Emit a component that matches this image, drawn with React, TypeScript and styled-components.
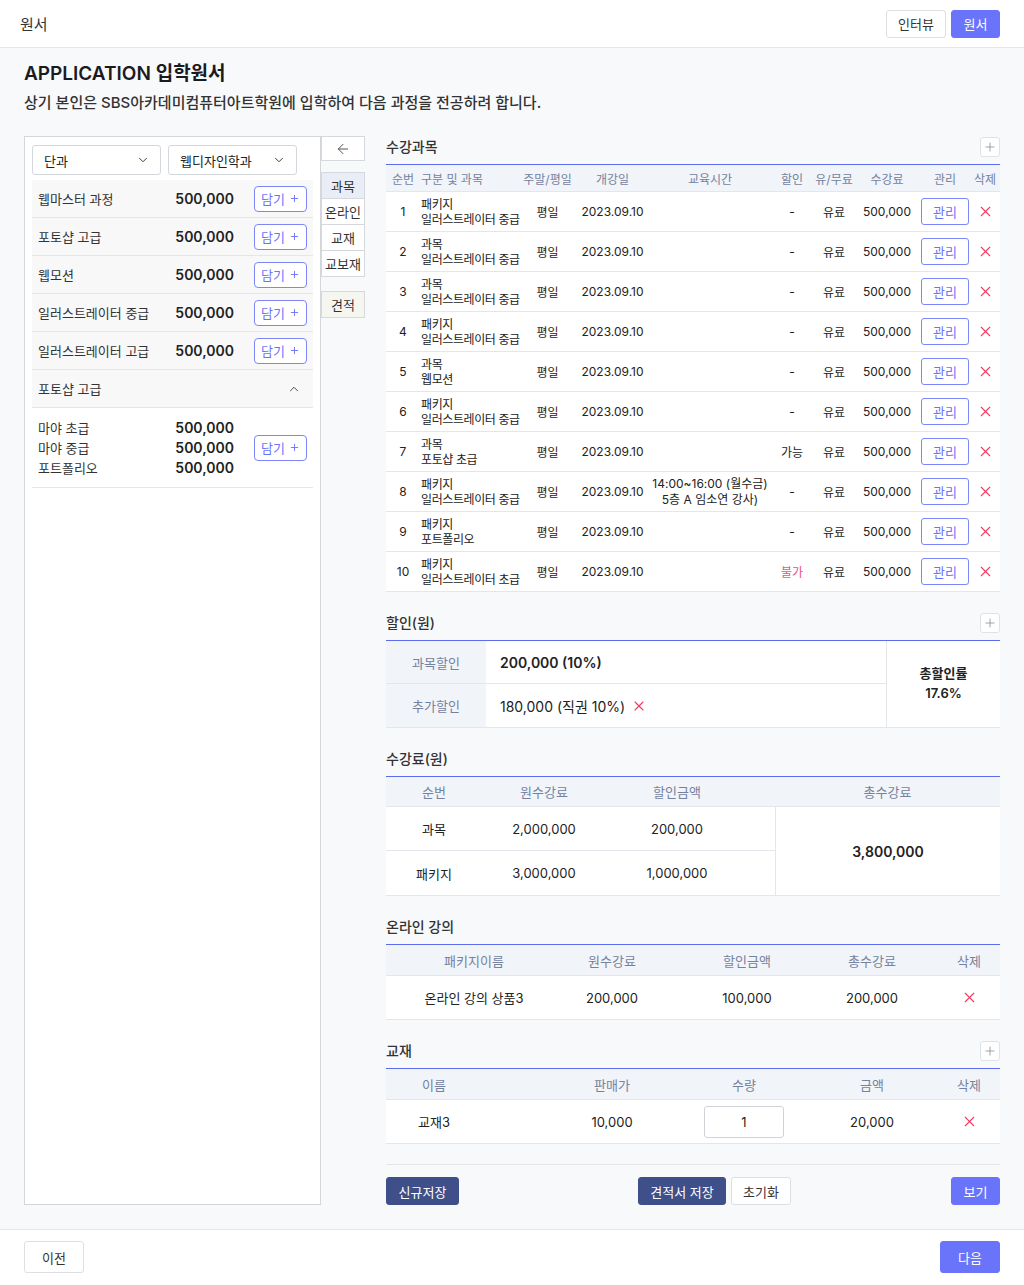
import React from 'react';
import styled, { createGlobalStyle } from 'styled-components';
import { ArrowLeft, ChevronDown, ChevronUp, Plus, X } from 'lucide-react';

const GlobalStyle = createGlobalStyle`
    * { box-sizing: border-box; }
    body {
        margin: 0;
        background: #f8f9fb;
        font-family: 'Inter', 'Noto Sans CJK KR', sans-serif;
        color: #222;
    }
`;

const BLUE = '#6a74fb';
const NAVY = '#3f4f8a';
const LINE = '#e3e6ea';
const HEAD_BG = '#f1f4f8';
const HEAD_TEXT = '#7482a0';
const RED = '#f43b63';

// 상단 헤더
const TopBar = styled.header`
    height: 48px;
    background: white;
    border-bottom: 1px solid ${LINE};
    display: flex;
    align-items: center;
    justify-content: space-between;
    padding: 0 24px 0 20px;
`;

const TopTitle = styled.div`
    font-size: 15px;
    color: #333;
`;

const TopButtons = styled.div`
    display: flex;
    gap: 5px;
`;

const Btn = styled.button<{ $variant?: 'primary' | 'navy' | 'ghost' | 'outline'; $h?: number; $w?: number }>`
    height: ${p => p.$h || 28}px;
    ${p => p.$w ? `width: ${p.$w}px;` : ''}
    font-family: inherit;
    font-size: 13px;
    border-radius: 3px;
    cursor: pointer;
    display: inline-flex;
    align-items: center;
    justify-content: center;
    gap: 4px;
    padding: 0;
    border: 1px solid ${p => p.$variant === 'primary' ? BLUE : p.$variant === 'navy' ? NAVY : p.$variant === 'outline' ? '#7c86f6' : '#dcdfe4'};
    background: ${p => p.$variant === 'primary' ? BLUE : p.$variant === 'navy' ? NAVY : 'white'};
    color: ${p => p.$variant === 'primary' || p.$variant === 'navy' ? 'white' : p.$variant === 'outline' ? '#6a74fb' : '#333'};
`;

const Main = styled.main`
    padding: 12px 24px 24px;
`;

const Title = styled.h1`
    margin: 0;
    font-size: 19px;
    line-height: 28px;
    font-weight: 600;
    color: #1b1b1f;
`;

const SubTitle = styled.p`
    margin: 4px 0 0;
    font-size: 15px;
    line-height: 22px;
    font-weight: 500;
    color: #333;
`;

const Layout = styled.div`
    margin-top: 22px;
    display: grid;
    grid-template-columns: 297px 45px 1fr;
`;

// 왼쪽 과목 목록
const LeftPanel = styled.aside`
    background: white;
    border: 1px solid #d3d6db;
    padding: 8px 7px;
`;

const SelectRow = styled.div`
    display: flex;
    gap: 7px;
    margin-bottom: 5px;
`;

const Select = styled.div`
    width: 129px;
    height: 30px;
    border: 1px solid #d4d7dc;
    border-radius: 3px;
    display: flex;
    align-items: center;
    justify-content: space-between;
    padding: 0 10px 0 11px;
    font-size: 13px;
    color: #222;
`;

const ItemRow = styled.div<{ $white?: boolean; $tall?: boolean }>`
    height: ${p => p.$tall ? 80 : 38}px;
    background: ${p => p.$white ? 'white' : '#f8f8f9'};
    border-bottom: 1px solid ${LINE};
    display: grid;
    grid-template-columns: 1fr 80px 73px;
    align-items: center;
    padding: 0 6px;
    font-size: 13px;
    color: #333;
`;

const Price = styled.span`
    font-size: 14px;
    font-weight: 600;
    color: #222;
    text-align: right;
`;

const Stack = styled.div<{ $right?: boolean }>`
    display: flex;
    flex-direction: column;
    line-height: 20px;
    text-align: ${p => p.$right ? 'right' : 'left'};
`;

const CartButton = styled(Btn)`
    justify-self: end;
    height: 26px;
    width: 53px;
    font-size: 13px;
    border-radius: 4px;
`;

const AccordionHead = styled.div`
    height: 38px;
    background: #f8f8f9;
    border-bottom: 1px solid ${LINE};
    display: flex;
    align-items: center;
    justify-content: space-between;
    padding: 0 12px 0 6px;
    font-size: 13px;
    color: #333;
`;

// 가운데 탭
const MidColumn = styled.div`
    display: flex;
    flex-direction: column;
`;

const MidBox = styled.div<{ $bg?: string }>`
    width: 44px;
    height: 27px;
    border: 1px solid #d5d8dd;
    margin-top: -1px;
    display: flex;
    align-items: center;
    justify-content: center;
    background: ${p => p.$bg || 'white'};
    font-size: 13px;
    color: #333;
`;

const BackBox = styled(MidBox)`
    height: 25px;
    margin-top: 0;
    margin-bottom: 12px;
    color: #555;
`;

const Spacer = styled.div<{ $h: number }>`
    height: ${p => p.$h}px;
`;

// 오른쪽 내용
const RightColumn = styled.section`
    margin-left: 20px;
    display: flex;
    flex-direction: column;
`;

const SectionHead = styled.div<{ $first?: boolean }>`
    height: 22px;
    margin: ${p => p.$first ? 0 : 20}px 0 6px;
    display: flex;
    align-items: center;
    justify-content: space-between;
    font-size: 14px;
    font-weight: 500;
    color: #333;
`;

const HeadText = styled.span`
    margin-top: -3px;
`;

const PlusBtn = styled.div`
    width: 20px;
    height: 20px;
    border: 1px solid #dfe2e6;
    border-radius: 3px;
    background: white;
    display: flex;
    align-items: center;
    justify-content: center;
    color: #888;
`;

const Table = styled.div`
    border-top: 1px solid #5b6cf0;
    background: white;
`;

const GridRow = styled.div<{ $cols: string; $h: number; $head?: boolean; $size?: number }>`
    display: grid;
    grid-template-columns: ${p => p.$cols};
    height: ${p => p.$h}px;
    align-items: center;
    background: ${p => p.$head ? HEAD_BG : 'white'};
    border-bottom: 1px solid ${LINE};
    font-size: ${p => p.$size || 12}px;
    color: ${p => p.$head ? HEAD_TEXT : '#222'};
`;

const Cell = styled.div<{ $align?: 'left' | 'center' | 'right'; $pl?: number; $pr?: number; $color?: string }>`
    padding-left: ${p => p.$pl || 0}px;
    padding-right: ${p => p.$pr || 0}px;
    ${p => p.$color ? `color: ${p.$color};` : ''}
    display: flex;
    justify-content: ${p => p.$align === 'left' ? 'flex-start' : p.$align === 'right' ? 'flex-end' : 'center'};
    align-items: center;
    white-space: nowrap;
`;

const SubjectCell = styled.div`
    display: flex;
    flex-direction: column;
    line-height: 15px;
    font-size: 12px;
    letter-spacing: -0.4px;
    white-space: nowrap;
    padding-left: 1px;
`;

const TimeCell = styled.div`
    text-align: center;
    line-height: 16px;
    white-space: nowrap;
`;

const ManageBtn = styled(Btn)`
    height: 27px;
    width: 48px;
    margin: 0 auto;
    font-size: 13px;
`;

const RowIcon = styled(X)`
    color: ${RED};
`;

// 할인 테이블
const DiscountGrid = styled.div`
    display: grid;
    grid-template-columns: 100px 400px 114px;
    grid-template-rows: 43px 43px;
    background: white;
    border-top: 1px solid #5b6cf0;
    border-bottom: 1px solid ${LINE};
`;

const LabelCell = styled.div<{ $line?: boolean }>`
    background: ${HEAD_BG};
    color: ${HEAD_TEXT};
    font-size: 13px;
    display: flex;
    align-items: center;
    justify-content: center;
    ${p => p.$line ? `border-bottom: 1px solid ${LINE};` : ''}
`;

const ValueCell = styled.div<{ $bold?: boolean; $line?: boolean }>`
    display: flex;
    align-items: center;
    gap: 6px;
    padding-left: 14px;
    font-size: 14px;
    font-weight: ${p => p.$bold ? 600 : 400};
    ${p => p.$line ? `border-bottom: 1px solid ${LINE};` : ''}
`;

const TotalCell = styled.div`
    grid-row: 1 / span 2;
    grid-column: 3;
    border-left: 1px solid ${LINE};
    display: flex;
    flex-direction: column;
    align-items: center;
    justify-content: center;
    font-size: 13px;
    font-weight: 600;
    line-height: 20px;
    padding-bottom: 2px;
`;

// 수강료 테이블
const FeeGrid = styled.div`
    display: grid;
    grid-template-columns: 96px 124px 142px 27px 225px;
    grid-template-rows: 30px 44px 44px;
    background: white;
    border-top: 1px solid #5b6cf0;
    border-bottom: 1px solid ${LINE};
    font-size: 13px;
`;

const FeeHead = styled.div`
    background: ${HEAD_BG};
    color: ${HEAD_TEXT};
    display: flex;
    align-items: center;
    justify-content: center;
    border-bottom: 1px solid ${LINE};
`;

const FeeCell = styled.div<{ $line?: boolean }>`
    display: flex;
    align-items: center;
    justify-content: center;
    ${p => p.$line ? `border-bottom: 1px solid ${LINE};` : ''}
`;

const FeeTotal = styled.div`
    grid-column: 5;
    grid-row: 2 / span 2;
    border-left: 1px solid ${LINE};
    display: flex;
    align-items: center;
    justify-content: center;
    font-size: 14px;
    font-weight: 600;
`;

const QtyInput = styled.div`
    width: 80px;
    height: 32px;
    border: 1px solid #cfd3d8;
    border-radius: 3px;
    display: flex;
    align-items: center;
    justify-content: center;
    font-size: 13px;
    background: white;
`;

const ActionBar = styled.div`
    margin-top: 20px;
    border-top: 1px solid ${LINE};
    padding-top: 12px;
    display: flex;
    align-items: center;
    justify-content: space-between;
`;

const ActionGroup = styled.div<{ $offset?: number }>`
    display: flex;
    gap: 5px;
    margin-left: ${p => p.$offset || 0}px;
`;

const Footer = styled.footer`
    height: 56px;
    background: white;
    border-top: 1px solid ${LINE};
    display: flex;
    align-items: flex-start;
    justify-content: space-between;
    padding: 11px 24px 0;
`;

const leftItems = ['웹마스터 과정', '포토샵 고급', '웹모션', '일러스트레이터 중급', '일러스트레이터 고급'];

interface Course {
    type: string
    name: string
    time?: string[]
    discount: string
}

const courses: Course[] = [
    { type: '패키지', name: '일러스트레이터 중급', discount: '-' },
    { type: '과목', name: '일러스트레이터 중급', discount: '-' },
    { type: '과목', name: '일러스트레이터 중급', discount: '-' },
    { type: '패키지', name: '일러스트레이터 중급', discount: '-' },
    { type: '과목', name: '웹모션', discount: '-' },
    { type: '패키지', name: '일러스트레이터 중급', discount: '-' },
    { type: '과목', name: '포토샵 초급', discount: '가능' },
    { type: '패키지', name: '일러스트레이터 중급', time: ['14:00~16:00 (월수금)', '5층 A 임소연 강사)'], discount: '-' },
    { type: '패키지', name: '포트폴리오', discount: '-' },
    { type: '패키지', name: '일러스트레이터 초급', discount: '불가' },
];

const courseCols = '34px 100px 55px 75px 120px 44px 40px 66px 50px 30px';
const listCols = '176px 100px 170px 80px 88px';

const CartBtn = () => (
    <CartButton $variant="outline">담기 <Plus size={11} strokeWidth={2} /></CartButton>
);

const App = function() {
    return (
        <>
            <GlobalStyle/>
            <TopBar>
                <TopTitle>원서</TopTitle>
                <TopButtons>
                    <Btn $w={60} $h={28}>인터뷰</Btn>
                    <Btn $variant="primary" $w={49} $h={28}>원서</Btn>
                </TopButtons>
            </TopBar>

            <Main>
                <Title>APPLICATION 입학원서</Title>
                <SubTitle>상기 본인은 SBS아카데미컴퓨터아트학원에 입학하여 다음 과정을 전공하려 합니다.</SubTitle>

                <Layout>
                    <LeftPanel>
                        <SelectRow>
                            <Select>단과 <ChevronDown size={14} strokeWidth={1.5} /></Select>
                            <Select>웹디자인학과 <ChevronDown size={14} strokeWidth={1.5} /></Select>
                        </SelectRow>
                        {leftItems.map(item => (
                            <ItemRow key={item}>
                                <span>{item}</span>
                                <Price>500,000</Price>
                                <CartBtn/>
                            </ItemRow>
                        ))}
                        <AccordionHead>
                            포토샵 고급
                            <ChevronUp size={14} strokeWidth={1.5} />
                        </AccordionHead>
                        <ItemRow $white $tall>
                            <Stack>
                                <span>마야 초급</span>
                                <span>마야 중급</span>
                                <span>포트폴리오</span>
                            </Stack>
                            <Stack $right>
                                <Price>500,000</Price>
                                <Price>500,000</Price>
                                <Price>500,000</Price>
                            </Stack>
                            <CartBtn/>
                        </ItemRow>
                    </LeftPanel>

                    <MidColumn>
                        <BackBox><ArrowLeft size={16} strokeWidth={1.5} /></BackBox>
                        <MidBox $bg="#e9edf5">과목</MidBox>
                        <MidBox>온라인</MidBox>
                        <MidBox>교재</MidBox>
                        <MidBox>교보재</MidBox>
                        <Spacer $h={15}/>
                        <MidBox $bg="#f6f6f1">견적</MidBox>
                    </MidColumn>

                    <RightColumn>
                        <SectionHead $first>
                            <HeadText>수강과목</HeadText>
                            <PlusBtn><Plus size={14} strokeWidth={1.3} /></PlusBtn>
                        </SectionHead>
                        <Table>
                            <GridRow $cols={courseCols} $h={27} $head>
                                <Cell>순번</Cell>
                                <Cell $align="left" $pl={1}>구분 및 과목</Cell>
                                <Cell>주말/평일</Cell>
                                <Cell>개강일</Cell>
                                <Cell>교육시간</Cell>
                                <Cell>할인</Cell>
                                <Cell>유/무료</Cell>
                                <Cell>수강료</Cell>
                                <Cell>관리</Cell>
                                <Cell>삭제</Cell>
                            </GridRow>
                            {courses.map((c, i) => (
                                <GridRow key={i} $cols={courseCols} $h={40}>
                                    <Cell>{i + 1}</Cell>
                                    <SubjectCell>
                                        <span>{c.type}</span>
                                        <span>{c.name}</span>
                                    </SubjectCell>
                                    <Cell>평일</Cell>
                                    <Cell>2023.09.10</Cell>
                                    <TimeCell>{c.time && c.time.map(t => <div key={t}>{t}</div>)}</TimeCell>
                                    <Cell $color={c.discount === '불가' ? '#f0507a' : undefined}>{c.discount}</Cell>
                                    <Cell>유료</Cell>
                                    <Cell>500,000</Cell>
                                    <Cell><ManageBtn $variant="outline">관리</ManageBtn></Cell>
                                    <Cell><RowIcon size={17} strokeWidth={1.6} /></Cell>
                                </GridRow>
                            ))}
                        </Table>

                        <SectionHead>
                            <HeadText>할인(원)</HeadText>
                            <PlusBtn><Plus size={14} strokeWidth={1.3} /></PlusBtn>
                        </SectionHead>
                        <DiscountGrid>
                            <LabelCell $line>과목할인</LabelCell>
                            <ValueCell $bold $line>200,000 (10%)</ValueCell>
                            <TotalCell>
                                <span>총할인률</span>
                                <span>17.6%</span>
                            </TotalCell>
                            <LabelCell>추가할인</LabelCell>
                            <ValueCell>180,000 (직권 10%) <RowIcon size={16} strokeWidth={1.6} /></ValueCell>
                        </DiscountGrid>

                        <SectionHead><HeadText>수강료(원)</HeadText></SectionHead>
                        <FeeGrid>
                            <FeeHead>순번</FeeHead>
                            <FeeHead>원수강료</FeeHead>
                            <FeeHead>할인금액</FeeHead>
                            <FeeHead/>
                            <FeeHead>총수강료</FeeHead>
                            <FeeCell $line>과목</FeeCell>
                            <FeeCell $line>2,000,000</FeeCell>
                            <FeeCell $line>200,000</FeeCell>
                            <FeeCell $line/>
                            <FeeTotal>3,800,000</FeeTotal>
                            <FeeCell>패키지</FeeCell>
                            <FeeCell>3,000,000</FeeCell>
                            <FeeCell>1,000,000</FeeCell>
                            <FeeCell/>
                        </FeeGrid>

                        <SectionHead><HeadText>온라인 강의</HeadText></SectionHead>
                        <Table>
                            <GridRow $cols={listCols} $h={31} $head $size={13}>
                                <Cell>패키지이름</Cell>
                                <Cell>원수강료</Cell>
                                <Cell>할인금액</Cell>
                                <Cell>총수강료</Cell>
                                <Cell $pl={26}>삭제</Cell>
                            </GridRow>
                            <GridRow $cols={listCols} $h={44} $size={13}>
                                <Cell>온라인 강의 상품3</Cell>
                                <Cell>200,000</Cell>
                                <Cell>100,000</Cell>
                                <Cell>200,000</Cell>
                                <Cell $pl={26}><RowIcon size={17} strokeWidth={1.6} /></Cell>
                            </GridRow>
                        </Table>

                        <SectionHead>
                            <HeadText>교재</HeadText>
                            <PlusBtn><Plus size={14} strokeWidth={1.3} /></PlusBtn>
                        </SectionHead>
                        <Table>
                            <GridRow $cols={listCols} $h={31} $head $size={13}>
                                <Cell $pr={80}>이름</Cell>
                                <Cell>판매가</Cell>
                                <Cell $pr={6}>수량</Cell>
                                <Cell>금액</Cell>
                                <Cell $pl={26}>삭제</Cell>
                            </GridRow>
                            <GridRow $cols={listCols} $h={44} $size={13}>
                                <Cell $pr={80}>교재3</Cell>
                                <Cell>10,000</Cell>
                                <Cell $pr={6}><QtyInput>1</QtyInput></Cell>
                                <Cell>20,000</Cell>
                                <Cell $pl={26}><RowIcon size={17} strokeWidth={1.6} /></Cell>
                            </GridRow>
                        </Table>

                        <ActionBar>
                            <ActionGroup>
                                <Btn $variant="navy" $w={73}>신규저장</Btn>
                            </ActionGroup>
                            <ActionGroup $offset={19}>
                                <Btn $variant="navy" $w={88}>견적서 저장</Btn>
                                <Btn $w={60}>초기화</Btn>
                            </ActionGroup>
                            <ActionGroup>
                                <Btn $variant="primary" $w={49}>보기</Btn>
                            </ActionGroup>
                        </ActionBar>
                    </RightColumn>
                </Layout>
            </Main>

            <Footer>
                <Btn $w={60} $h={32}>이전</Btn>
                <Btn $variant="primary" $w={60} $h={32}>다음</Btn>
            </Footer>
        </>
    )
}

export default App;
